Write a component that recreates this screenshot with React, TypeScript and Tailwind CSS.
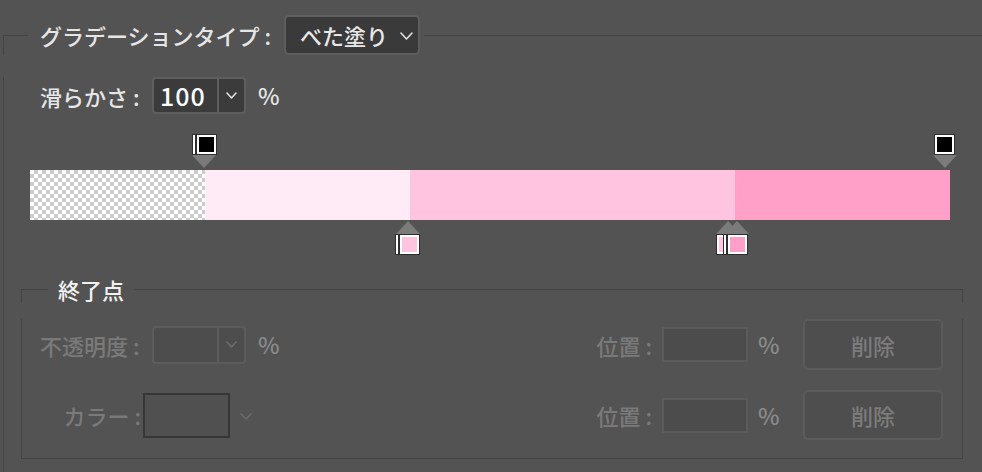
import React from "react";

function Chevron({ className = "", color = "#e0e0e0", w = 13, h = 8 }: { className?: string; color?: string; w?: number; h?: number }) {
  return (
    <svg width={w} height={h} viewBox={`0 0 ${w} ${h}`} className={className}>
      <polyline points={`1,1 ${w / 2},${h - 1} ${w - 1},1`} fill="none" stroke={color} strokeWidth="1.6" strokeLinecap="round" strokeLinejoin="round" />
    </svg>
  );
}

function Marker({ pos, fill, bar, box = "border-2", gap = "gap-[2px]" }: { pos: string; fill: string; bar?: boolean; box?: string; gap?: string }) {
  return (
    <div className={`absolute flex h-[21px] bg-[#2e2e2e] p-[1px] ${gap} ${pos}`}>
      {bar && <div className="w-[2px] bg-white" />}
      <div className={`h-[19px] w-[19px] border-white ${box} ${fill}`} />
    </div>
  );
}

function Tri({ pos, up }: { pos: string; up?: boolean }) {
  return (
    <svg width="24" height="13" viewBox="0 0 24 13" className={`absolute ${pos}`}>
      <polygon points={up ? "0,13 24,13 12,0" : "0,0 24,0 12,13"} fill="#7b7b7b" />
    </svg>
  );
}

export default function App() {
  const font = "font-['Noto_Sans_CJK_JP',sans-serif]";
  return (
    <div className={`h-[472px] w-[982px] overflow-hidden bg-[#535353] pl-[3px] pt-[15px] font-medium ${font}`}>
      {/* header */}
      <div className="flex h-[40px]">
        <div className="h-[20px] w-[25px] self-end border-l border-t border-[#444444]" />
        <div className="ml-[12px] w-[244px] self-center text-[22px] leading-none text-[#e6e6e6]">
          グラデーションタイプ :
        </div>
        <div className="flex h-[40px] w-[136px] items-center rounded-[5px] border-2 border-[#5e5e5e] bg-[#3a3a3a] pl-[14px]">
          <span className="text-[22px] leading-none text-[#e8e8e8]">べた塗り</span>
          <Chevron className="ml-[12px] mt-[2px]" />
        </div>
        <div className="ml-[4px] h-[20px] flex-1 self-end border-t border-[#444444]" />
      </div>

      {/* body */}
      <div className="h-[417px] border-l border-[#444444]">
        {/* smoothness */}
        <div className="ml-[36px] mt-[22px] flex h-[37px] items-center">
          <div className="w-[112px] text-[22px] leading-none text-[#e6e6e6]">滑らかさ :</div>
          <div className="flex h-[37px] w-[94px] rounded-[4px] border-2 border-[#5e5e5e] bg-[#3b3b3b]">
            <div className="flex w-[63px] items-center pl-[6px] text-[25px] leading-none tracking-[1px] text-white">100</div>
            <div className="flex flex-1 items-center justify-center border-l-2 border-[#5e5e5e]">
              <Chevron w={11} h={7} />
            </div>
          </div>
          <div className="ml-[12px] text-[23px] leading-none text-[#e6e6e6]">%</div>
        </div>

        {/* gradient */}
        <div className="relative ml-[26px] mt-[19px] h-[122px] w-[920px] pt-[37px]">
          <div className="flex h-[50px]">
            <div className="w-[175px] bg-[image:conic-gradient(#cccccc_25%,#ffffff_0_50%,#cccccc_0_75%,#ffffff_0)] bg-[length:8px_8px]" />
            <div className="w-[205px] bg-[#ffebf5]" />
            <div className="w-[325px] bg-[#ffc4e0]" />
            <div className="w-[215px] bg-[#ffa0c9]" />
          </div>
          <Tri pos="left-[162px] top-[22px]" />
          <Marker pos="left-[162px] top-[1px]" fill="bg-black" bar />
          <Tri pos="left-[903px] top-[22px]" />
          <Marker pos="left-[904px] top-[1px]" fill="bg-black" />

          <Tri pos="left-[366px] top-[88px]" up />
          <Marker pos="left-[365px] top-[101px]" fill="bg-[#ffc4e0]" bar />
          <Tri pos="left-[686px] top-[88px]" up />
          <Tri pos="left-[695px] top-[88px]" up />
          <Marker pos="left-[686px] top-[101px]" fill="bg-[#ffc4e0]" bar box="border-2 border-l-0" gap="gap-0" />
          <Marker pos="left-[693px] top-[101px]" fill="bg-[#ffa0c9]" bar />
        </div>

        {/* end point section */}
        <div className="ml-[17px] mt-[20px] w-[942px]">
          <div className="flex h-[28px]">
            <div className="h-[14px] w-[27px] self-end border-l border-t border-[#444444]" />
            <div className="ml-[10px] self-center text-[22px] leading-none text-[#f2f2f2]">終了点</div>
            <div className="ml-[10px] h-[14px] flex-1 self-end border-r border-t border-[#444444]" />
          </div>
          <div className="border-b border-l border-r border-[#444444] pb-[18px] pl-[18px] pr-[19px]">
            {/* row 1 */}
            <div className="mt-[16px] flex h-[51px] items-center">
              <div className="w-[112px] text-[22px] leading-none text-[#7a7a7a]">不透明度 :</div>
              <div className="flex h-[38px] w-[94px] rounded-[4px] border-2 border-[#5c5c5c] bg-[#4d4d4d]">
                <div className="w-[63px]" />
                <div className="flex flex-1 items-center justify-center border-l-2 border-[#5c5c5c]">
                  <Chevron w={11} h={7} color="#6c6c6c" />
                </div>
              </div>
              <div className="ml-[12px] text-[23px] leading-none text-[#8a8a8a]">%</div>
              <div className="flex-1" />
              <div className="text-[22px] leading-none text-[#7a7a7a]">位置 :</div>
              <div className="ml-[10px] h-[35px] w-[86px] border-2 border-[#5b5b5b] bg-[#4c4c4c]" />
              <div className="ml-[10px] w-[20px] text-[23px] leading-none text-[#8a8a8a]">%</div>
              <div className="ml-[25px] flex h-[51px] w-[140px] items-center justify-center rounded-[5px] border-2 border-[#5b5b5b] bg-[#4e4e4e] text-[22px] leading-none text-[#7c7c7c]">
                削除
              </div>
            </div>
            {/* row 2 */}
            <div className="mt-[20px] flex h-[50px] items-center">
              <div className="w-[101px] text-right text-[22px] leading-none text-[#7a7a7a]">カラー :</div>
              <div className="ml-[2px] h-[45px] w-[87px] border-2 border-[#363636] bg-[#505050]" />
              <Chevron className="ml-[10px] mt-[2px]" w={12} h={7} color="#6a6a6a" />
              <div className="flex-1" />
              <div className="text-[22px] leading-none text-[#7a7a7a]">位置 :</div>
              <div className="ml-[10px] h-[35px] w-[86px] border-2 border-[#5b5b5b] bg-[#4c4c4c]" />
              <div className="ml-[10px] w-[20px] text-[23px] leading-none text-[#8a8a8a]">%</div>
              <div className="ml-[25px] flex h-[50px] w-[140px] items-center justify-center rounded-[5px] border-2 border-[#5b5b5b] bg-[#4e4e4e] text-[22px] leading-none text-[#7c7c7c]">
                削除
              </div>
            </div>
          </div>
        </div>
      </div>
    </div>
  );
}
